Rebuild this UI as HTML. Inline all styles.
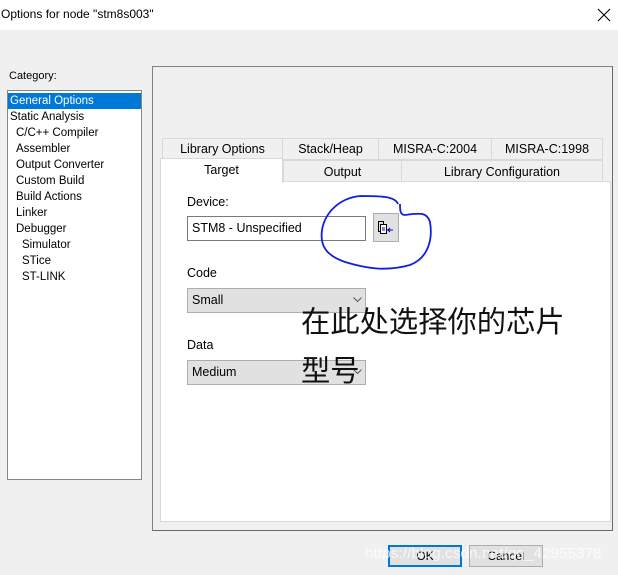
<!DOCTYPE html>
<html><head><meta charset="utf-8"><style>
*{margin:0;padding:0;box-sizing:border-box}
body{width:618px;height:575px;background:#f0f0f0;font-family:"Liberation Sans","Noto Sans CJK SC",sans-serif;font-size:11.5px;color:#000;position:relative;overflow:hidden}
.a{position:absolute}
.title{left:0;top:0;width:618px;height:30px;background:#fff}
.list{left:7px;top:90px;width:135px;height:390px;background:#fff;border:1px solid #828790;padding-top:2px}
.list div{height:16px;line-height:16px;padding-left:2px;white-space:nowrap}
.sel{background:#0078d7;color:#fff}
.tab{position:absolute;background:#f0f0f0;border:1px solid #d9d9d9;text-align:center;line-height:20px;font-size:12.5px}
.fld{position:absolute;border:1px solid #adadad;font-size:12.5px;padding-left:4px;line-height:22px}
</style></head><body>
<div class="a title"></div>
<div class="a" style="left:1px;top:7px;font-size:12px">Options for node "stm8s003"</div>
<svg class="a" style="left:597px;top:8px" width="14" height="14"><path d="M1 1L13 13M13 1L1 13" stroke="#000" stroke-width="1.1"/></svg>
<div class="a" style="left:9px;top:70px;font-size:11px">Category:</div>
<div class="a list">
<div class="sel">General Options</div>
<div>Static Analysis</div>
<div style="padding-left:8px">C/C++ Compiler</div>
<div style="padding-left:8px">Assembler</div>
<div style="padding-left:8px">Output Converter</div>
<div style="padding-left:8px">Custom Build</div>
<div style="padding-left:8px">Build Actions</div>
<div style="padding-left:8px">Linker</div>
<div style="padding-left:8px">Debugger</div>
<div style="padding-left:14px">Simulator</div>
<div style="padding-left:14px">STice</div>
<div style="padding-left:14px">ST-LINK</div>
</div>
<div class="a" style="left:152px;top:66px;width:461px;height:465px;border:1px solid #828282;border-right-color:#696969;border-bottom-color:#696969"></div>
<div class="a" style="left:160px;top:181px;width:451px;height:341px;background:#fff;border:1px solid #d9d9d9"></div>
<div class="tab" style="left:162px;top:138px;width:121px;height:22px">Library Options</div>
<div class="tab" style="left:282px;top:138px;width:97px;height:22px">Stack/Heap</div>
<div class="tab" style="left:378px;top:138px;width:114px;height:22px">MISRA-C:2004</div>
<div class="tab" style="left:491px;top:138px;width:112px;height:22px">MISRA-C:1998</div>
<div class="tab" style="left:283px;top:160px;width:119px;height:22px;line-height:23px">Output</div>
<div class="tab" style="left:401px;top:160px;width:202px;height:22px;line-height:23px">Library Configuration</div>
<div class="tab" style="left:160px;top:158px;width:123px;height:25px;background:#fff;border-bottom:none;line-height:22px">Target</div>
<div class="a" style="left:187px;top:195px;font-size:12.5px">Device:</div>
<div class="fld" style="left:187px;top:216px;width:179px;height:25px;background:#fff;border-color:#7a7a7a">STM8 - Unspecified</div>
<div class="a" style="left:373px;top:213px;width:26px;height:29px;background:#e1e1e1;border:1px solid #adadad"></div>
<svg class="a" style="left:377px;top:220px" width="18" height="16"><rect x="1.5" y="1.5" width="5" height="10" fill="none" stroke="#000"/><rect x="3.5" y="4.5" width="6" height="9" fill="#fff" stroke="#000"/><path d="M5 8h3M5 10h3" stroke="#00f"/><path d="M10 10h6M13 8l-2 2 2 2" stroke="#00a" fill="none"/></svg>
<div class="a" style="left:187px;top:266px;font-size:12.5px">Code</div>
<div class="fld" style="left:187px;top:288px;width:179px;height:25px;background:#e1e1e1">Small</div>
<svg class="a" style="left:353px;top:297px" width="9" height="6"><path d="M0.5 0.5L4.5 4.5L8.5 0.5" stroke="#555" fill="none"/></svg>
<div class="a" style="left:187px;top:338px;font-size:12.5px">Data</div>
<div class="fld" style="left:187px;top:360px;width:179px;height:25px;background:#e1e1e1">Medium</div>
<svg class="a" style="left:353px;top:369px" width="9" height="6"><path d="M0.5 0.5L4.5 4.5L8.5 0.5" stroke="#555" fill="none"/></svg>
<svg class="a" style="left:0;top:0" width="618" height="575"><path d="M398 204C395 196 380 196 360 196C340 198 325 212 322 230C320 245 325 255 345 262C365 268 385 272 410 265C428 258 433 240 430 222C427 212 420 213 405 215C400 215 400 210 400 204" fill="none" stroke="#1020e0" stroke-width="1.8"/></svg>
<div class="a" style="left:301px;top:302px;font-size:29.3px;line-height:36px;font-family:'Noto Sans CJK SC',sans-serif;color:#111;white-space:nowrap">在此处选择你的芯片</div>
<div class="a" style="left:301px;top:351px;font-size:29.3px;line-height:36px;font-family:'Noto Sans CJK SC',sans-serif;color:#111">型号</div>
<div class="a" style="left:388px;top:545px;width:74px;height:22px;background:#e1e1e1;border:2px solid #0078d7;text-align:center;line-height:18px;font-size:12px">OK</div>
<div class="a" style="left:469px;top:545px;width:74px;height:22px;background:#e1e1e1;border:1px solid #adadad;text-align:center;line-height:20px;font-size:12px">Cancel</div>
<div class="a" style="left:365px;top:545px;font-size:15px;color:rgba(255,255,255,0.75);letter-spacing:0.2px">https://blog.csdn.net/qq_42955378</div>
</body></html>
